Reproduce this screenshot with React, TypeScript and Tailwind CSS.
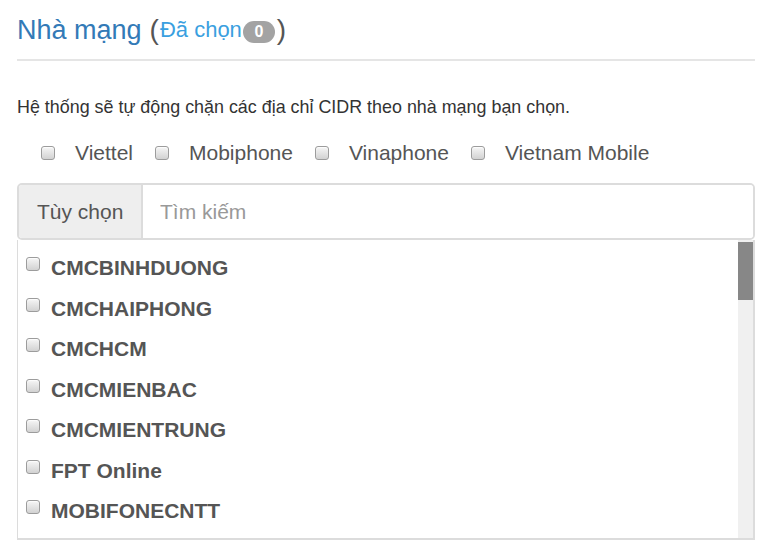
import React from 'react';

/*
  Data
*/
const carriers = ['Viettel', 'Mobiphone', 'Vinaphone', 'Vietnam Mobile'];

const networks = [
  'CMCBINHDUONG',
  'CMCHAIPHONG',
  'CMCHCM',
  'CMCMIENBAC',
  'CMCMIENTRUNG',
  'FPT Online',
  'MOBIFONECNTT',
];

function Box() {
  return (
    <span className="inline-block w-[14px] h-[14px] shrink-0 rounded-[3px] border border-[#9c9c9c] bg-gradient-to-b from-[#f6f6f6] to-[#d2d2d2] shadow-[inset_0_1px_1px_rgba(255,255,255,0.8)]" />
  );
}

export default function App() {
  return (
    <main
      className="min-h-screen bg-white text-[#555]"
      style={{ fontFamily: '"Liberation Sans", Arial, sans-serif' }}
    >
      <div className="ml-[17px] w-[738px] pt-[13px]">

        {/* Title */}
        <h3 className="flex items-center text-[27px] leading-[34px] text-[#337ab7] font-normal">
          <span>Nhà mạng</span>
          <span className="ml-[8px] text-[28px] text-[#555]">(</span>
          <span className="text-[22px] text-[#3a9fe0] ml-[1px]">Đã chọn</span>
          <span className="ml-[1px] mt-[3px] inline-flex items-center justify-center w-[32px] h-[22px] rounded-full bg-[#a3a3a3] text-white text-[16px] font-bold leading-none">0</span>
          <span className="ml-[2px] text-[28px] text-[#555]">)</span>
        </h3>

        <div className="mt-[12px] h-[2px] bg-[#e5e5e5]" />

        {/* Description */}
        <p className="mt-[34px] text-[17.9px] leading-[24px] text-[#333]">
          Hệ thống sẽ tự động chặn các địa chỉ CIDR theo nhà mạng bạn chọn.
        </p>

        {/* Carriers */}
        <div className="mt-[20px] flex items-center pl-[24px] h-[28px] text-[21px] leading-[28px] text-[#555]">
          {carriers.map((name) => (
            <label key={name} className="flex items-center mr-[22px]">
              <Box />
              <span className="ml-[20px]">{name}</span>
            </label>
          ))}
        </div>

        {/* Search group */}
        <div className="mt-[16px] flex h-[57px] border-2 border-[#dcdcdc] rounded-[5px] overflow-hidden">
          <div className="flex items-center shrink-0 w-[124px] pl-[18px] whitespace-nowrap bg-[#eeeeee] border-r-2 border-[#dcdcdc] text-[21px] text-[#555]">
            Tùy chọn
          </div>
          <input
            className="flex-1 min-w-0 px-[17px] text-[21px] text-[#555] placeholder:text-[#999] outline-none bg-white"
            placeholder="Tìm kiếm"
          />
        </div>

        {/* Network list */}
        <div className="flex h-[300px] border-l border-r-2 border-b-2 border-[#dcdcdc]">
          <ul className="flex-1 overflow-hidden pt-[7.5px]">
            {networks.map((name) => (
              <li key={name} className="flex items-center h-[40.5px] pl-[8px]">
                <span className="-mt-[3px]"><Box /></span>
                <span className="ml-[11px] text-[21px] font-bold text-[#555]">{name}</span>
              </li>
            ))}
          </ul>

          {/* Scrollbar */}
          <div className="w-[15px] bg-[#f0f0f0] pt-[2px]">
            <div className="h-[58px] bg-[#878787]" />
          </div>
        </div>

      </div>
    </main>
  );
}
